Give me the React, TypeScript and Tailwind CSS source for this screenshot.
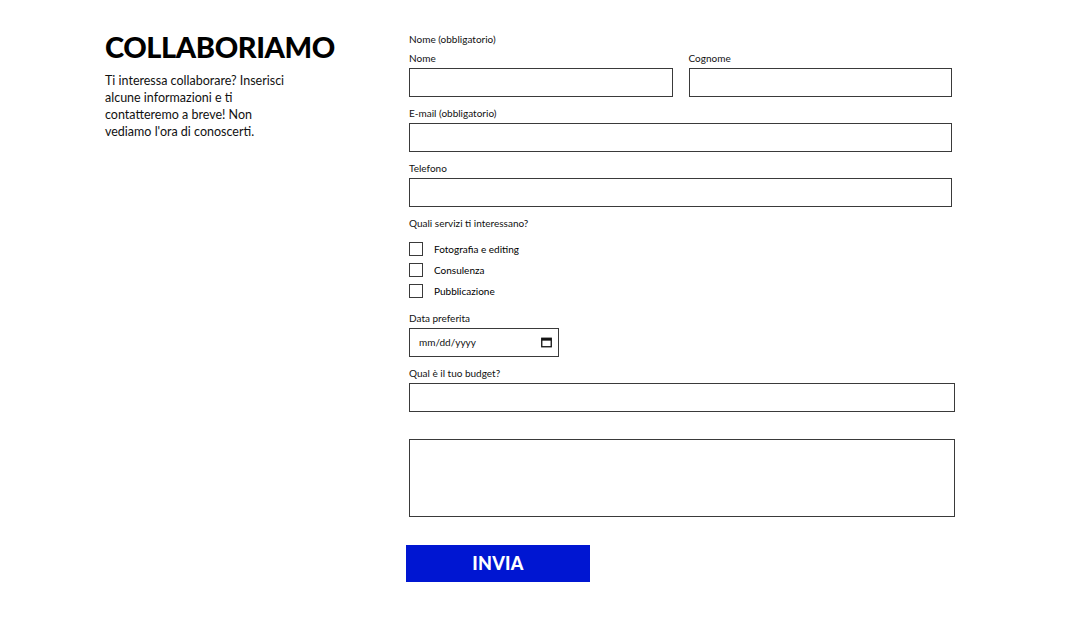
import React from "react";

const font = { fontFamily: "Lato, 'Noto Sans', sans-serif" };

function Label({ children, className = "" }: { children?: React.ReactNode; className?: string }) {
  return <div className={`text-[10px] leading-[14px] h-[14px] text-[#111] ${className}`}>{children}</div>;
}

function Box({ className = "" }: { className?: string }) {
  return <div className={`h-[29px] border border-[#3a3a3a] bg-white ${className}`} />;
}

export default function App() {
  return (
    <div className="w-[1071px] h-[621px] bg-white text-black" style={font}>
      <div className="flex pt-[32px]">
        <div className="ml-[105px] w-[304px] shrink-0">
          <h1 className="text-[29px] leading-[30px] font-black tracking-[-0.4px]">COLLABORIAMO</h1>
          <p className="mt-[10px] w-[186px] text-[12.5px] leading-[17px] text-[#111]">
            Ti interessa collaborare? Inserisci alcune informazioni e ti contatteremo a breve! Non vediamo l'ora di conoscerti.
          </p>
        </div>
        <div className="flex flex-col">
          <Label>Nome (obbligatorio)</Label>
          <div className="flex gap-[16px] mt-[5px] w-[543px]">
            <div className="flex-1">
              <Label>Nome</Label>
              <Box className="mt-[3px]" />
            </div>
            <div className="flex-1">
              <Label>Cognome</Label>
              <Box className="mt-[3px]" />
            </div>
          </div>
          <Label className="mt-[9px]">E-mail (obbligatorio)</Label>
          <Box className="mt-[3px] w-[543px]" />
          <Label className="mt-[9px]">Telefono</Label>
          <Box className="mt-[3px] w-[543px]" />
          <Label className="mt-[9px]">Quali servizi ti interessano?</Label>
          <div className="mt-[12px] flex flex-col gap-[7px]">
            {["Fotografia e editing", "Consulenza", "Pubblicazione"].map((t) => (
              <div key={t} className="flex items-center h-[14px]">
                <div className="w-[14px] h-[14px] border border-[#3a3a3a]" />
                <span className="ml-[11px] text-[10px] leading-[14px]">{t}</span>
              </div>
            ))}
          </div>
          <Label className="mt-[13px]">Data preferita</Label>
          <div className="mt-[3px] w-[150px] h-[29px] border border-[#3a3a3a] flex items-center justify-between pl-[9px] pr-[6px]">
            <span className="text-[10px] text-[#111]">mm/dd/yyyy</span>
            <svg width="11" height="11" viewBox="0 0 11 11">
              <rect x="0.75" y="1.25" width="9.5" height="8.5" fill="none" stroke="#111" strokeWidth="1.3" />
              <rect x="0.75" y="1.25" width="9.5" height="2.4" fill="#111" />
            </svg>
          </div>
          <Label className="mt-[9px]">Qual è il tuo budget?</Label>
          <Box className="mt-[3px] w-[546px]" />
          <div className="mt-[27px] w-[546px] h-[78px] border border-[#3a3a3a]" />
          <button className="mt-[28px] -ml-[3px] w-[184px] h-[37px] bg-[#0016d2] text-white text-[18px] font-black tracking-[0.3px]">
            INVIA
          </button>
        </div>
      </div>
    </div>
  );
}
